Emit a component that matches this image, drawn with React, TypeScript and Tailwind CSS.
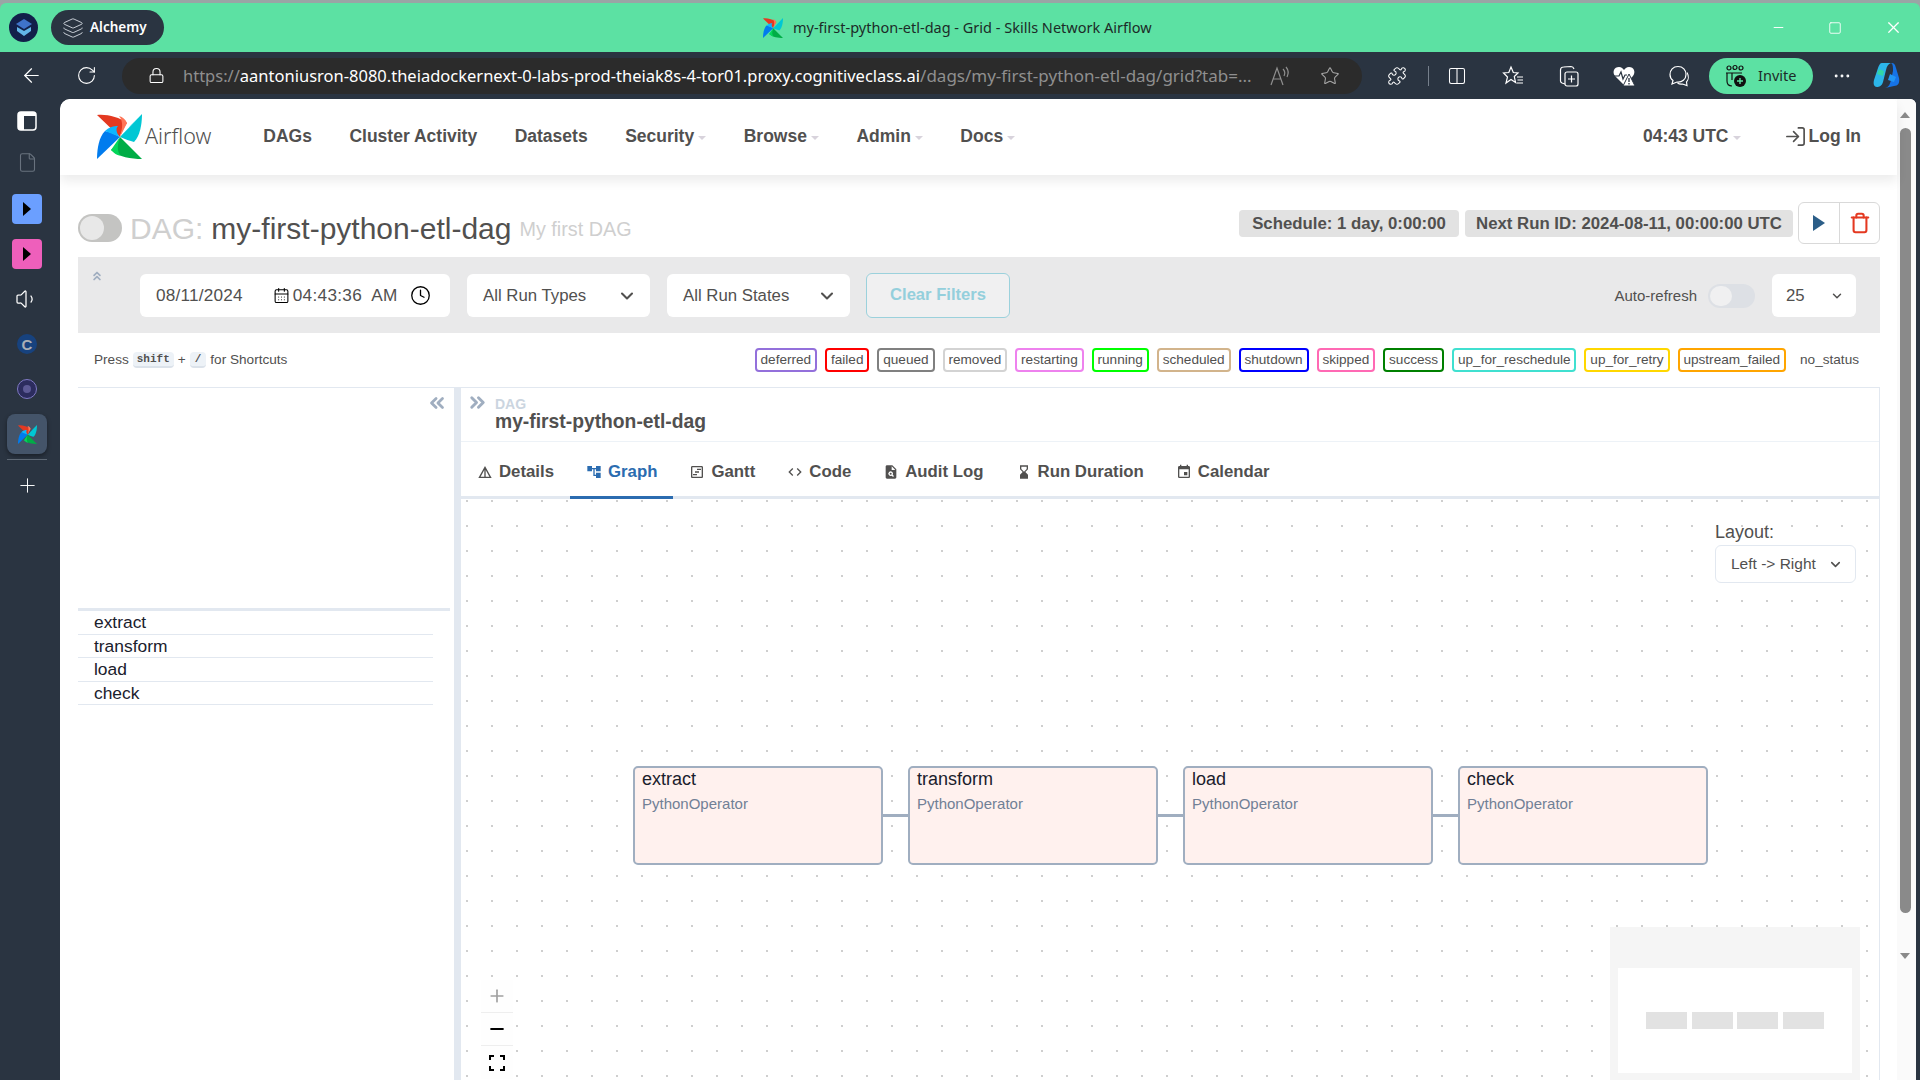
import {
  ArrowLeft,
  RotateCw,
  Lock,
  Star,
  Puzzle,
  Columns2,
  Minus,
  Square,
  X,
  File,
  Volume1,
  Plus,
  ChevronDown,
  ChevronsLeft,
  ChevronsRight,
  ChevronsUp,
  LogIn,
  Clock,
  CalendarDays,
  Trash,
  Layers,
  MoreHorizontal,
} from "lucide-react";
import {
  MdDetails,
  MdAccountTree,
  MdOutlineViewTimeline,
  MdCode,
  MdPlagiarism,
  MdHourglassBottom,
  MdEvent,
} from "react-icons/md";

const tabs = [
  { label: "Details", Icon: MdDetails },
  { label: "Graph", Icon: MdAccountTree, active: true },
  { label: "Gantt", Icon: MdOutlineViewTimeline },
  { label: "Code", Icon: MdCode },
  { label: "Audit Log", Icon: MdPlagiarism },
  { label: "Run Duration", Icon: MdHourglassBottom },
  { label: "Calendar", Icon: MdEvent },
];

const states = [
  { label: "deferred", cls: "border-[#9370db]" },
  { label: "failed", cls: "border-[#ff0000]" },
  { label: "queued", cls: "border-[#808080]" },
  { label: "removed", cls: "border-[#d3d3d3]" },
  { label: "restarting", cls: "border-[#ee82ee]" },
  { label: "running", cls: "border-[#00ff00]" },
  { label: "scheduled", cls: "border-[#d2b48c]" },
  { label: "shutdown", cls: "border-[#0000ff]" },
  { label: "skipped", cls: "border-[#ff69b4]" },
  { label: "success", cls: "border-[#008000]" },
  { label: "up_for_reschedule", cls: "border-[#40e0d0]" },
  { label: "up_for_retry", cls: "border-[#ffd700]" },
  { label: "upstream_failed", cls: "border-[#ffa500]" },
];

const taskNames = ["extract", "transform", "load", "check"];

function Pinwheel({ size }: { size: number }) {
  return (
    <svg width={size} height={size} viewBox="0 0 45 45" className="shrink-0">
      <path d="M0 1 L23 23 C24 17 28 12 30 9 C22 3 10 0 0 1Z" fill="#e43921" />
      <path d="M23 23 L30 9 C28 5 26 3 22 2 C27 8 25 16 23 23Z" fill="#ff7557" />
      <path d="M45 0 L23 23 C28 25 33 27 37 28 C43 22 45 10 45 0Z" fill="#00c7d4" />
      <path d="M45 0 L23 23 C28 19 32 13 35 10Z" fill="#11e1ee" />
      <path d="M45 45 L23 23 C21 28 18 33 14 36 C22 43 34 45 45 45Z" fill="#00ad46" />
      <path d="M23 23 L14 36 C18 40 20 41 24 42 C19 37 21 29 23 23Z" fill="#04d659" />
      <path d="M0 45 L23 23 C18 20 13 18 8 17 C2 23 0 35 0 45Z" fill="#017cee" />
      <path d="M23 23 L8 17 C12 13 17 12 21 12 C18 15 20 20 23 23Z" fill="#0cb6ff" />
    </svg>
  );
}

function TitleBar() {
  return (
    <div className="h-[52px] shrink-0 bg-[#9aa5a5] pt-[3px]">
      <div className="relative flex h-[49px] items-center rounded-t-[6px] bg-[#5ce1a3] pl-[9px] pr-[17px]">
        <div className="flex h-[29px] w-[29px] items-center justify-center rounded-full bg-[#12204a]">
          <svg width="16" height="18" viewBox="0 0 16 18">
            <path d="M8 0 L16 5 L8 10 L0 5Z" fill="#3f73c9" />
            <path d="M1 8 L8 12 L15 8 L15 12 L8 17 L1 12Z" fill="#62b5e8" />
          </svg>
        </div>
        <div className="ml-[13px] flex h-[35px] w-[113px] items-center gap-[6px] rounded-full bg-[#2a3441] pl-[11px] font-['Noto_Sans',sans-serif] text-[13.5px] font-semibold text-white">
          <Layers size={22} strokeWidth={1} className="text-[#d5dbe2]" />
          Alchemy
        </div>
        <div className="ml-[599px] flex items-center gap-[10px] text-[14.5px] text-[#1c2b28] font-['Noto_Sans',sans-serif]">
          <Pinwheel size={20} />
          <span>my-first-python-etl-dag - Grid - Skills Network Airflow</span>
        </div>
        <div className="ml-auto flex items-center gap-[42px] text-white">
          <Minus size={15} strokeWidth={1.5} />
          <Square size={14} strokeWidth={1.5} />
          <X size={19} strokeWidth={1.5} />
        </div>
      </div>
    </div>
  );
}

function ReadAloud() {
  return (
    <svg width="22" height="22" viewBox="0 0 22 22" fill="none" stroke="#8f8f8f" strokeWidth="1.2">
      <path d="M2 20 L8 3 L14 20 M4.5 14 H11.5" />
      <path d="M14 4 C16 6 16 9 15 11 M17 2 C19.5 5 19.5 9 18 12" />
    </svg>
  );
}

function Favorites() {
  return (
    <svg width="22" height="22" viewBox="0 0 22 22" fill="none" stroke="currentColor" strokeWidth="1.2">
      <path d="M9 2 L11.3 7.5 L16 8 L12.3 11.5 L13.5 17.5 L9 14.5 L4 18 L5.5 12 L1.5 8 L6.8 7.5Z" />
      <path d="M15 12 H21 M15.5 15 H21 M14.5 18 H21" />
    </svg>
  );
}

function Collections() {
  return (
    <svg width="24" height="24" viewBox="0 0 24 24" fill="none" stroke="currentColor" strokeWidth="1.2">
      <rect x="8" y="8" width="13" height="14" rx="2" />
      <path d="M14.5 11.5 V18.5 M11 15 H18" />
      <path d="M8 20 L5 19 C4 18.5 3.5 18 3.5 17 L3.5 6 C3.5 4 5 3 6.5 3 L14 2.5 C15.5 2.5 16.5 3.5 17 5" />
    </svg>
  );
}

function HeartAlert() {
  return (
    <svg width="24" height="24" viewBox="0 0 24 24">
      <path d="M12 21 L3 12 C0 8 2 3 7 3 C9.5 3 11 4.5 12 6 C13 4.5 14.5 3 17 3 C22 3 24 8 21 12Z" fill="white" />
      <path d="M1 12 H7 L9 8 L11 15 L13 11 H15" fill="none" stroke="#2a3441" strokeWidth="1.2" />
      <path d="M17 10 L23 22 H11Z" fill="white" stroke="#2a3441" strokeWidth="1" />
      <path d="M17 14 V18 M17 19 V20.5" stroke="#2a3441" strokeWidth="1.3" />
    </svg>
  );
}

function ChatBubbles() {
  return (
    <svg width="24" height="24" viewBox="0 0 24 24" fill="none" stroke="currentColor" strokeWidth="1.2">
      <path d="M11 2.5 C6 2.5 3 6 3 10.5 C3 13 4 15 6 16.5 L5 20 L10 18 C15 18.5 19 15.5 19 10.5 C19 6 16 2.5 11 2.5Z" />
      <path d="M20 8.5 C22 12 21.5 16 19.5 18 L20 21.5 L15.5 20 C13.5 20.5 12 20 10.5 19" />
    </svg>
  );
}

function InviteIcon() {
  return (
    <svg width="24" height="24" viewBox="0 0 24 24" fill="none" stroke="#111" strokeWidth="1.2">
      <circle cx="5" cy="4" r="2" />
      <circle cx="11" cy="3.5" r="2" />
      <circle cx="17" cy="4" r="2" />
      <path d="M2 9 H18 M3 9 V17 C3 20 5 22 8 22 M8 9 V16" />
      <circle cx="16" cy="17" r="6" fill="#111" stroke="none" />
      <path d="M16 14 V20 M13 17 H19" stroke="#5ce1a3" strokeWidth="1.4" />
    </svg>
  );
}

function Copilot() {
  return (
    <svg width="28" height="28" viewBox="0 0 28 28">
      <path d="M9 1 H18 C15 2 14 4 13 8 L10 20 C9 24 6 25 4 25 C1 25 0 22 1 18 L5 6 C6 3 7 1 9 1Z" fill="#2cb6ea" />
      <path d="M18 1 C21 1 22 2 23 6 L26 16 C27 21 25 24 21 24 L12 26 C16 25 17 22 18 18 L20 9 C20 5 20 2 18 1Z" fill="#1673e6" />
      <path d="M6 7 L11 9 L10 14 L4 12Z" fill="#33d6a6" />
      <path d="M17 12 L23 15 L21 20 L15 18Z" fill="#2196f3" />
    </svg>
  );
}

function BrowserBar() {
  return (
    <div className="flex h-[47px] shrink-0 items-center bg-[#2a3441] text-white">
      <ArrowLeft size={23} strokeWidth={1.25} className="ml-[20px]" />
      <RotateCw size={21} strokeWidth={1.25} className="ml-[33px]" />
      <div className="ml-[25px] flex h-[36px] w-[1240px] items-center rounded-full bg-[#2b2b2b] pl-[26px] font-['Noto_Sans',sans-serif] text-[16.5px] whitespace-nowrap">
        <Lock size={17} strokeWidth={1.5} />
        <div className="ml-[18px] w-[1068px] overflow-hidden">
          <span className="text-[#8f8f8f]">https://</span>
          <span>aantoniusron-8080.theiadockernext-0-labs-prod-theiak8s-4-tor01.proxy.cognitiveclass.ai</span>
          <span className="text-[17px] text-[#8f8f8f]">/dags/my-first-python-etl-dag/grid?tab=...</span>
        </div>
        <span className="ml-[18px]">
          <ReadAloud />
        </span>
        <Star size={20} strokeWidth={1.25} className="ml-[29px] text-[#a8a8a8]" />
      </div>
      <Puzzle size={20} strokeWidth={1.25} className="ml-[25px]" />
      <div className="ml-[21px] h-[20px] w-px bg-[#76808c]" />
      <Columns2 size={20} strokeWidth={1.25} className="ml-[18px]" />
      <span className="ml-[35px]">
        <Favorites />
      </span>
      <span className="ml-[33px]">
        <Collections />
      </span>
      <span className="ml-[31px]">
        <HeartAlert />
      </span>
      <span className="ml-[31px]">
        <ChatBubbles />
      </span>
      <div className="ml-[18px] flex h-[36px] w-[104px] items-center gap-[10px] rounded-full bg-[#5ce1a3] pl-[15px] font-['Noto_Sans',sans-serif] text-[14.5px] text-[#1c2b28]">
        <InviteIcon />
        Invite
      </div>
      <MoreHorizontal size={20} strokeWidth={1.5} className="ml-[19px]" />
      <span className="ml-[21px]">
        <Copilot />
      </span>
    </div>
  );
}

function SideRail() {
  return (
    <div className="flex w-[60px] shrink-0 flex-col items-center bg-[#2a3441] pr-[6px] text-white">
      <svg width="20" height="20" viewBox="0 0 20 20" className="mt-[12px]">
        <rect x="1" y="1" width="18" height="18" rx="3" fill="none" stroke="white" strokeWidth="1.5" />
        <path d="M1 4 C1 2 2 1 4 1 H16 C18 1 19 2 19 4 V5 H7 V19 H4 C2 19 1 18 1 16Z" fill="white" />
      </svg>
      <File size={21} strokeWidth={1.25} className="mt-[21px] text-[#68727e]" />
      <div className="mt-[21px] flex h-[30px] w-[30px] items-center justify-center rounded-[4px] bg-[#6b9fff]">
        <div className="h-0 w-0 border-y-[7px] border-l-[8px] border-y-transparent border-l-black" />
      </div>
      <div className="mt-[15px] flex h-[30px] w-[30px] items-center justify-center rounded-[4px] bg-[#ee5fbb]">
        <div className="h-0 w-0 border-y-[7px] border-l-[8px] border-y-transparent border-l-black" />
      </div>
      <Volume1 size={24} strokeWidth={1.25} className="mt-[18px]" />
      <div className="mt-[23px] flex h-[20px] w-[20px] items-center justify-center rounded-full bg-[#17427e] text-[15px] leading-none font-bold text-[#a9afb6] font-['Liberation_Sans',sans-serif]">
        C
      </div>
      <div className="mt-[25px] flex h-[20px] w-[20px] items-center justify-center rounded-full border border-[#7f79c4] bg-[#2c2c5e]">
        <div className="h-[8px] w-[8px] rounded-full bg-[#5d5a95]" />
      </div>
      <div className="mt-[15px] flex h-[40px] w-[40px] items-center justify-center rounded-[8px] bg-[#445469] shadow-[0_2px_4px_rgba(0,0,0,0.4)]">
        <Pinwheel size={19} />
      </div>
      <div className="mt-[5px] h-px w-[40px] bg-[#5e6874]" />
      <Plus size={23} strokeWidth={1} className="mt-[14px]" />
    </div>
  );
}

function NavCaret({ children }: { children: string }) {
  return (
    <span className="flex items-center gap-[4px]">
      {children}
      <span className="mt-[3px] h-0 w-0 border-x-[4px] border-t-[4px] border-x-transparent border-t-[#d8d3dc]" />
    </span>
  );
}

function TopNav() {
  return (
    <div className="relative z-10 flex h-[76px] shrink-0 items-center rounded-tl-[10px] rounded-tr-[6px] bg-white pb-[1px] pl-[37px] text-[17.5px] font-bold text-[#51504f] shadow-[0_6px_12px_rgba(0,0,0,0.08)]">
      <Pinwheel size={45} />
      <span className="ml-[3px] mr-[52px] font-['Noto_Sans',sans-serif] text-[21.5px] font-light">Airflow</span>
      <div className="flex gap-[37.5px]">
        <span>DAGs</span>
        <span>Cluster Activity</span>
        <span>Datasets</span>
        <NavCaret>Security</NavCaret>
        <NavCaret>Browse</NavCaret>
        <NavCaret>Admin</NavCaret>
        <NavCaret>Docs</NavCaret>
      </div>
      <div className="ml-auto flex items-center">
        <NavCaret>04:43 UTC</NavCaret>
        <LogIn size={23} strokeWidth={1.75} className="ml-[43px] mr-[2px]" />
        <span className="mr-[36px]">Log In</span>
      </div>
    </div>
  );
}

function TitleRow() {
  return (
    <div className="flex h-[82px] shrink-0 justify-between">
      <div className="mt-[35px] flex h-[36px] items-center">
        <div className="flex h-[28px] w-[44px] items-center rounded-full bg-[#c4c4c2] pl-[2px]">
          <div className="h-[24px] w-[24px] rounded-full bg-[#e8e8e8]" />
        </div>
        <span className="ml-[8px] text-[30px] text-[#cfcfcf]">DAG:</span>
        <span className="ml-[8px] text-[30px] text-[#51504f]">my-first-python-etl-dag</span>
        <span className="ml-[8px] mt-[4px] text-[19.8px] text-[#cfcfcf]">My first DAG</span>
      </div>
      <div className="mt-[27px] flex items-start">
        <div className="mt-[8px] flex h-[27px] w-[220px] items-center justify-center rounded-[4px] bg-[#e2e2e2] text-[16.8px] font-bold text-[#51504f]">
          Schedule: 1 day, 0:00:00
        </div>
        <div className="ml-[6px] mt-[8px] flex h-[27px] w-[328px] items-center justify-center rounded-[4px] bg-[#e2e2e2] text-[16.8px] font-bold text-[#51504f]">
          Next Run ID: 2024-08-11, 00:00:00 UTC
        </div>
        <div className="ml-[5px] flex h-[42px] w-[82px] rounded-[6px] border border-[#d9d9d9]">
          <div className="flex w-[41px] items-center justify-center border-r border-[#d9d9d9]">
            <div className="h-0 w-0 border-y-[8px] border-l-[12px] border-y-transparent border-l-[#2c5e88]" />
          </div>
          <div className="flex flex-1 items-center justify-center text-[#e43921]">
            <Trash size={22} strokeWidth={2.25} />
          </div>
        </div>
      </div>
    </div>
  );
}

function FilterBar() {
  return (
    <div className="relative flex h-[76px] shrink-0 items-start bg-[#e9e9ea] pt-[17px] pl-[62px] text-[16.8px] text-[#51504f]">
      <ChevronsUp size={14} strokeWidth={3} className="absolute left-[12px] top-[12px] text-[#a0aec0]" />
      <div className="flex h-[43px] w-[310px] items-center rounded-[6px] bg-white pl-[16px] text-[17.2px]">
        <span className="tracking-[0.2px]">08/11/2024</span>
        <CalendarDays size={17} strokeWidth={1.5} className="ml-[30px] text-black" />
        <span className="ml-[3px] tracking-[0.3px]">04:43:36&nbsp; AM</span>
        <Clock size={21} strokeWidth={1.5} className="ml-[12px] text-black" />
      </div>
      <div className="ml-[17px] flex h-[43px] w-[183px] items-center justify-between rounded-[6px] bg-white pl-[16px] pr-[13px]">
        All Run Types
        <ChevronDown size={20} strokeWidth={2.5} />
      </div>
      <div className="ml-[17px] flex h-[43px] w-[183px] items-center justify-between rounded-[6px] bg-white pl-[16px] pr-[13px]">
        All Run States
        <ChevronDown size={20} strokeWidth={2.5} />
      </div>
      <div className="ml-[16px] -mt-px flex h-[45px] w-[144px] items-center justify-center rounded-[6px] border border-[#9bd1dc] bg-[#f0f0f1] text-[16.6px] font-bold text-[#94cfdc]">
        Clear Filters
      </div>
      <span className="ml-auto mt-[11px] text-[15px]">Auto-refresh</span>
      <div className="ml-[11px] mt-[10px] flex h-[24px] w-[47px] items-center rounded-full bg-[#dde0e5] pl-[2px]">
        <div className="h-[20px] w-[22px] rounded-full bg-[#f0f0f1]" />
      </div>
      <div className="ml-[17px] mr-[24px] flex h-[43px] w-[84px] items-center justify-between rounded-[6px] bg-white pl-[14px] pr-[12px]">
        25
        <ChevronDown size={14} strokeWidth={2.5} />
      </div>
    </div>
  );
}

function LegendRow() {
  return (
    <div className="flex h-[55px] shrink-0 items-center border-b border-[#e2e8f0] pl-[16px] pr-[21px] text-[13.6px] text-[#51504f]">
      <span>Press</span>
      <kbd className="ml-[4px] rounded-[4px] border-b-2 border-[#dbe2ea] bg-[#edf2f7] px-[4px] font-['Liberation_Mono',monospace] text-[11px] font-bold leading-[14px]">
        shift
      </kbd>
      <span className="mx-[4px]">+</span>
      <kbd className="rounded-[4px] border-b-2 border-[#dbe2ea] bg-[#edf2f7] px-[5px] font-['Liberation_Mono',monospace] text-[11px] font-bold leading-[14px]">
        /
      </kbd>
      <span className="ml-[4px]">for Shortcuts</span>
      <div className="ml-auto flex items-center gap-[8px]">
        {states.map((s) => (
          <span key={s.label} className={`flex h-[24px] items-center rounded-[4px] border-2 px-[3.9px] ${s.cls}`}>
            {s.label}
          </span>
        ))}
        <span className="ml-[6px]">no_status</span>
      </div>
    </div>
  );
}

function TaskList() {
  return (
    <div className="w-[376px] shrink-0">
      <div className="flex h-[220px] justify-end pr-[6px] pt-[4px] text-[#a0aec0]">
        <ChevronsLeft size={22} strokeWidth={3} />
      </div>
      <div className="h-[3px] w-[372px] bg-[#e2e8f0]" />
      {taskNames.map((name) => (
        <div
          key={name}
          className="flex h-[23.5px] w-[355px] items-center border-b border-[#e2e8f0] pl-[16px] text-[17.4px] text-[#1a202c]"
        >
          {name}
        </div>
      ))}
    </div>
  );
}

function TabBar() {
  return (
    <div className="flex h-[57px] shrink-0 border-b-[3px] border-[#e2e8f0] text-[16.8px] font-bold text-[#51504f]">
      {tabs.map(({ label, Icon, active }) => (
        <div
          key={label}
          className={`-mb-[3px] flex items-center gap-[6px] px-[16px] pt-[5px] ${
            active ? "border-b-[3px] border-[#2b6cb0] text-[#2b6cb0]" : "border-b-[3px] border-transparent"
          }`}
        >
          <Icon size={16} />
          {label}
        </div>
      ))}
    </div>
  );
}

function GraphNode({ name }: { name: string }) {
  return (
    <div className="h-[99px] w-[250px] rounded-[5px] border-2 border-[#a0aec0] bg-[#fff1ee] px-[7px]">
      <div className="text-[18px] leading-[22px] text-[#1a202c]">{name}</div>
      <div className="mt-[3px] text-[15px] leading-[22px] text-[#718096]">PythonOperator</div>
    </div>
  );
}

function GraphCanvas() {
  return (
    <div className="relative flex-1 overflow-hidden bg-[radial-gradient(circle_at_6px_2px,#bdbdbd_0.6px,transparent_1px)] bg-[size:25px_25px]">
      <div className="absolute left-[1254px] top-[23px]">
        <div className="text-[18px] leading-[20px] text-[#51504f]">Layout:</div>
        <div className="mt-[3px] flex h-[38px] w-[141px] items-center justify-between rounded-[6px] border border-[#e2e8f0] bg-white pl-[15px] pr-[12px] text-[15.5px] text-[#51504f]">
          Left -&gt; Right
          <ChevronDown size={15} strokeWidth={2.5} />
        </div>
      </div>
      <div className="absolute left-[172px] top-[267px] flex items-center">
        {taskNames.map((name, i) => (
          <div key={name} className="flex items-center">
            {i > 0 && <div className="h-[3px] w-[25px] bg-[#a0aec0]" />}
            <GraphNode name={name} />
          </div>
        ))}
      </div>
      <div className="absolute left-[20px] top-[481px] w-[32px] text-[#51504f]">
        <div className="flex h-[33px] items-center justify-center border-b border-[#eeeeee] bg-[#fefefe] text-[#a0a0a0]">
          <Plus size={20} strokeWidth={2} />
        </div>
        <div className="flex h-[33px] items-center justify-center border-b border-[#eeeeee] bg-[#fefefe] text-black">
          <Minus size={20} strokeWidth={2.5} />
        </div>
        <div className="flex h-[33px] items-center justify-center bg-[#fefefe] text-black">
          <svg width="16" height="16" viewBox="0 0 16 16" fill="none" stroke="currentColor" strokeWidth="2">
            <path d="M1 5V1H5M11 1H15V5M15 11V15H11M5 15H1V11" />
          </svg>
        </div>
      </div>
      <div className="absolute left-[1149px] top-[428px] h-[160px] w-[250px] bg-[#f5f5f5] px-[8px] pt-[41px]">
        <div className="flex h-[105px] items-center justify-center gap-[4.5px] bg-white">
          <div className="h-[17px] w-[41px] bg-[#e2e2e2]" />
          <div className="h-[17px] w-[41px] bg-[#e2e2e2]" />
          <div className="h-[17px] w-[41px] bg-[#e2e2e2]" />
          <div className="h-[17px] w-[41px] bg-[#e2e2e2]" />
        </div>
      </div>
    </div>
  );
}

function DetailsPanel() {
  return (
    <div className="flex min-w-0 flex-1 flex-col border-r border-[#e2e8f0]">
      <div className="flex h-[54px] shrink-0 items-start border-b border-[#edf2f7] pl-[5px]">
        <ChevronsRight size={23} strokeWidth={3} className="mt-[3px] text-[#a0aec0]" />
        <div className="ml-[6px] mt-[9px]">
          <div className="text-[14px] font-bold leading-[14px] text-[#cbd5e0]">DAG</div>
          <div className="text-[19.3px] font-bold leading-[22px] text-[#51504f]">my-first-python-etl-dag</div>
        </div>
      </div>
      <TabBar />
      <GraphCanvas />
    </div>
  );
}

function ScrollStrip() {
  return (
    <div className="flex w-[19px] shrink-0 flex-col items-center bg-[#fafafa] pt-[13px] pr-[3px]">
      <div className="h-0 w-0 border-x-[5px] border-b-[6px] border-x-transparent border-b-[#8a8a8a]" />
      <div className="mt-[10px] h-[785px] w-[11px] rounded-full bg-[#8a8a8a]" />
      <div className="mt-[40px] h-0 w-0 border-x-[5px] border-t-[6px] border-x-transparent border-t-[#8a8a8a]" />
    </div>
  );
}

export default function App() {
  return (
    <div className="flex h-screen w-screen flex-col overflow-hidden bg-[#2a3441] font-['Liberation_Sans',Arial,sans-serif]">
      <TitleBar />
      <BrowserBar />
      <div className="flex min-h-0 flex-1">
        <SideRail />
        <div className="mr-[4px] flex min-w-0 flex-1 overflow-hidden rounded-tl-[10px] rounded-tr-[6px] bg-white">
          <div className="flex min-w-0 flex-1 flex-col">
            <TopNav />
            <div className="flex min-h-0 flex-1 flex-col pl-[18px] pr-[17px]">
              <TitleRow />
              <FilterBar />
              <LegendRow />
              <div className="flex min-h-0 flex-1">
                <TaskList />
                <div className="w-[7px] shrink-0 bg-[#e2e8f0]" />
                <DetailsPanel />
              </div>
            </div>
          </div>
          <ScrollStrip />
        </div>
      </div>
    </div>
  );
}
